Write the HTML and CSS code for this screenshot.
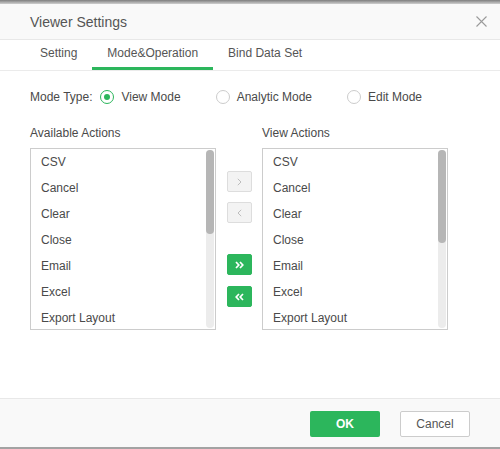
FILE: index.html
```html
<!DOCTYPE html>
<html>
<head>
<meta charset="utf-8">
<link rel="stylesheet" href="styles.css">
</head>
<body>
<div class="topbar"></div>
<div class="dialog">
  <div class="header">
    <span class="title">Viewer Settings</span>
    <svg class="close" width="11" height="11" viewBox="0 0 11 11"><path d="M0.5 0.5 L10.5 10.5 M10.5 0.5 L0.5 10.5" stroke="#9a9a9a" stroke-width="1.1" fill="none"/></svg>
  </div>
  <div class="tabs">
    <div class="tab">Setting</div>
    <div class="tab active">Mode&amp;Operation</div>
    <div class="tab">Bind Data Set</div>
  </div>
  <div class="content">
    <div class="mode-row">
      <span class="mode-label">Mode Type:</span>
      <span class="radio checked"><span class="radio-dot"></span>View Mode</span>
      <span class="radio"><span class="radio-dot"></span>Analytic Mode</span>
      <span class="radio"><span class="radio-dot"></span>Edit Mode</span>
    </div>
    <div class="lists">
      <div class="col">
        <div class="label">Available Actions</div>
        <div class="listbox">
          <div class="items">
            <div class="item">CSV</div>
            <div class="item">Cancel</div>
            <div class="item">Clear</div>
            <div class="item">Close</div>
            <div class="item">Email</div>
            <div class="item">Excel</div>
            <div class="item">Export Layout</div>
          </div>
          <div class="scroll"><div class="thumb" style="height:84px"></div></div>
        </div>
      </div>
      <div class="mover">
        <div class="mv"><svg width="5" height="8" viewBox="0 0 5 8"><path d="M0.8 0.8 L4 4 L0.8 7.2" stroke="#bdbdbd" stroke-width="1" fill="none"/></svg></div>
        <div class="mv mv-2"><svg width="5" height="8" viewBox="0 0 5 8"><path d="M4.2 0.8 L1 4 L4.2 7.2" stroke="#bdbdbd" stroke-width="1" fill="none"/></svg></div>
        <div class="mv green mv-3"><svg width="9" height="8" viewBox="0 0 9 8"><path d="M1 1 L3.8 4 L1 7 M5 1 L7.8 4 L5 7" stroke="#fff" stroke-width="1.7" fill="none"/></svg></div>
        <div class="mv green mv-4"><svg width="9" height="8" viewBox="0 0 9 8"><path d="M4 1 L1.2 4 L4 7 M8 1 L5.2 4 L8 7" stroke="#fff" stroke-width="1.7" fill="none"/></svg></div>
      </div>
      <div class="col">
        <div class="label">View Actions</div>
        <div class="listbox">
          <div class="items">
            <div class="item">CSV</div>
            <div class="item">Cancel</div>
            <div class="item">Clear</div>
            <div class="item">Close</div>
            <div class="item">Email</div>
            <div class="item">Excel</div>
            <div class="item">Export Layout</div>
          </div>
          <div class="scroll"><div class="thumb" style="height:93px"></div></div>
        </div>
      </div>
    </div>
  </div>
  <div class="footer">
    <div class="btn ok">OK</div>
    <div class="btn cancel">Cancel</div>
  </div>
</div>
</body>
</html>
```

FILE: styles.css
```css
html, body {
  margin: 0;
  padding: 0;
}
body {
  background: #a3a3a3;
  font-family: "Liberation Sans", Arial, sans-serif;
  font-size: 12px;
  color: #4a4a4a;
  width: 500px;
  height: 449px;
  overflow: hidden;
}
.topbar {
  height: 4px;
  background: linear-gradient(#7e7e7e, #cfcfcf);
}
.dialog {
  height: 443px;
  background: #fff;
  display: flex;
  flex-direction: column;
}
.header {
  height: 35px;
  flex: none;
  background: #f9f9f9;
  border-bottom: 1px solid #e8e8e8;
  display: flex;
  align-items: center;
  justify-content: space-between;
  padding: 0 13px 0 30px;
}
.title {
  font-size: 14px;
  color: #555;
}
.close {
  display: block;
}
.tabs {
  flex: none;
  height: 30px;
  display: flex;
  padding-left: 25px;
  border-bottom: 1px solid #ebebeb;
}
.tab {
  padding: 0 15px;
  height: 27px;
  line-height: 27px;
  border-bottom: 3px solid transparent;
  color: #555;
}
.tab.active {
  border-bottom-color: #2cb65c;
}
.content {
  flex: 1;
  padding: 16px 30px 0;
}
.mode-row {
  display: flex;
  align-items: center;
  height: 20px;
}
.mode-label {
  margin-right: 8px;
}
.radio {
  display: flex;
  align-items: center;
  margin-right: 35px;
}
.radio-dot {
  width: 12px;
  height: 12px;
  border: 1px solid #cccccc;
  border-radius: 50%;
  margin-right: 7px;
  display: flex;
  align-items: center;
  justify-content: center;
  background: #fff;
}
.radio.checked .radio-dot {
  border-color: #2cb65c;
}
.radio.checked .radio-dot::after {
  content: "";
  width: 6px;
  height: 6px;
  border-radius: 50%;
  background: #2cb65c;
}
.lists {
  display: flex;
  align-items: flex-end;
}
.col {
  width: 186px;
}
.label {
  margin-top: 18px;
  line-height: 16px;
  margin-bottom: 7px;
}
.listbox {
  height: 180px;
  border: 1px solid #cccccc;
  display: flex;
}
.items {
  flex: 1;
  overflow: hidden;
  padding-left: 10px;
}
.item {
  height: 26px;
  line-height: 26px;
  white-space: nowrap;
}
.scroll {
  width: 8px;
  margin: 1px 1px 1px 0;
  background: #ececec;
  border-radius: 4px;
}
.thumb {
  background: #b6b6b6;
  border-radius: 4px;
}
.mover {
  width: 46px;
  height: 182px;
  box-sizing: border-box;
  padding-top: 23px;
  display: flex;
  flex-direction: column;
  align-items: center;
}
.mv {
  width: 25px;
  height: 21px;
  box-sizing: border-box;
  border: 1px solid #dddddd;
  border-radius: 2px;
  background: #f3f3f3;
  display: flex;
  align-items: center;
  justify-content: center;
}
.mv svg {
  display: block;
}
.mv-2 {
  margin-top: 10px;
}
.mv-3 {
  margin-top: 31px;
}
.mv-4 {
  margin-top: 11px;
}
.mv.green {
  background: #2cb65c;
  border-color: #2cb65c;
}
.footer {
  flex: none;
  height: 49px;
  box-sizing: border-box;
  border-top: 1px solid #e8e8e8;
  background: #f9f9f9;
  display: flex;
  justify-content: flex-end;
  align-items: flex-start;
  padding: 12px 30px 0;
}
.btn {
  width: 70px;
  height: 26px;
  box-sizing: border-box;
  border-radius: 2px;
  display: flex;
  align-items: center;
  justify-content: center;
  font-size: 12px;
}
.ok {
  background: #2cb65c;
  color: #fff;
  font-weight: bold;
}
.cancel {
  margin-left: 20px;
  background: #fff;
  border: 1px solid #cccccc;
  color: #555;
}
```
